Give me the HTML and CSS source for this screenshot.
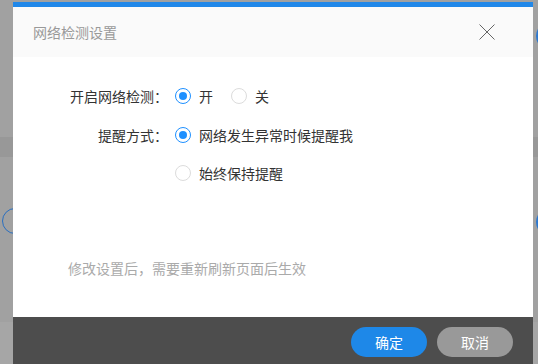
FILE: index.html
```html
<!DOCTYPE html>
<html lang="zh-CN">
  <head>
    <meta charset="UTF-8" />
    <meta name="viewport" content="width=device-width, initial-scale=1.0" />
    <title>网络检测设置</title>
    <link rel="stylesheet" href="styles.css">
  </head>
  <body>
    <!-- page behind the overlay -->
    <span class="bg-ring bg-ring-left"></span>
    <span class="bg-ring bg-ring-right-top"></span>
    <span class="bg-ring bg-ring-right-mid"></span>

    <div class="dialog">
      <div class="dialog-header">
        <span class="dialog-title">网络检测设置</span>
        <button class="close-btn" aria-label="关闭">
          <svg width="16" height="16" viewBox="0 0 16 16">
            <path d="M0.5 0.5 L15.5 15.5 M15.5 0.5 L0.5 15.5" stroke="#666" stroke-width="1" fill="none" />
          </svg>
        </button>
      </div>

      <div class="dialog-body">
        <div class="form-row">
          <span class="form-label">开启网络检测：</span>
          <div class="options">
            <label class="radio checked"><span class="dot"></span>开</label>
            <label class="radio"><span class="dot"></span>关</label>
          </div>
        </div>

        <div class="form-row">
          <span class="form-label">提醒方式：</span>
          <div class="options">
            <label class="radio checked"><span class="dot"></span>网络发生异常时候提醒我</label>
          </div>
        </div>

        <div class="form-row">
          <span class="form-label"></span>
          <div class="options">
            <label class="radio"><span class="dot"></span>始终保持提醒</label>
          </div>
        </div>

        <p class="note">修改设置后，需要重新刷新页面后生效</p>
      </div>

      <div class="dialog-footer">
        <button class="btn btn-primary">确定</button>
        <button class="btn btn-cancel">取消</button>
      </div>
    </div>
  </body>
</html>
```

FILE: styles.css
```css
body {
  font-family: 'Noto Sans CJK SC', 'Noto Sans', sans-serif;
  margin: 0;
  padding: 2px 0 0 13px;
  height: 364px;
  box-sizing: border-box;
  overflow: hidden;
  color: #333;
  background: linear-gradient(
    to bottom,
    #a1a1a1 0,
    #a1a1a1 137px,
    #989898 137px,
    #989898 157px,
    #a1a1a1 157px,
    #a1a1a1 322px,
    #a6a6a6 322px
  );
  position: relative;
}

.bg-ring {
  position: absolute;
  width: 24px;
  height: 24px;
  border: 1px solid #2a6fc0;
  border-radius: 50%;
}

.bg-ring-left {
  left: 2px;
  top: 208px;
}

.bg-ring-right-top {
  left: 536px;
  top: 22px;
  border-width: 2px;
  border-color: #2c78d0;
}

.bg-ring-right-mid {
  left: 536px;
  top: 208px;
  border-width: 2px;
  border-color: #2c78d0;
}

.dialog {
  position: relative;
  width: 520px;
  height: 370px;
  background: #fff;
  border-top: 5px solid #2188e9;
  display: flex;
  flex-direction: column;
}

.dialog-header {
  height: 50px;
  background: #fafafa;
  display: flex;
  align-items: center;
  justify-content: space-between;
  padding: 0 38px 0 20px;
}

.dialog-title {
  font-size: 14px;
  color: #999;
}

.close-btn {
  background: none;
  border: none;
  padding: 0;
  width: 16px;
  height: 16px;
  cursor: pointer;
  display: flex;
}

.dialog-body {
  height: 260px;
  box-sizing: border-box;
  padding-top: 29px;
  font-size: 14px;
}

.form-row {
  display: flex;
  align-items: center;
  height: 20px;
  margin-bottom: 18.5px;
}

.form-label {
  width: 155px;
  text-align: right;
  margin-right: 7px;
  line-height: 20px;
}

.options {
  display: flex;
  align-items: center;
  gap: 18px;
}

.radio {
  display: flex;
  align-items: center;
  gap: 8px;
  line-height: 20px;
  cursor: pointer;
}

.dot {
  width: 16px;
  height: 16px;
  box-sizing: border-box;
  border: 1px solid #dcdcdc;
  border-radius: 50%;
  display: flex;
  align-items: center;
  justify-content: center;
}

.radio.checked .dot {
  border-color: #1e90ff;
}

.radio.checked .dot::after {
  content: '';
  width: 8px;
  height: 8px;
  border-radius: 50%;
  background: #1e90ff;
}

.note {
  margin: 75px 0 0 55px;
  color: #aaa;
  font-size: 14px;
  line-height: 20px;
}

.dialog-footer {
  height: 53px;
  background: #4d4d4d;
  display: flex;
  justify-content: flex-end;
  align-items: flex-start;
  gap: 10px;
  padding: 10px 20px 0 0;
  box-sizing: border-box;
}

.btn {
  width: 76px;
  height: 30px;
  border: none;
  border-radius: 15px;
  color: #fff;
  font-family: inherit;
  font-size: 14px;
  cursor: pointer;
}

.btn-primary {
  background: #1e88e8;
}

.btn-cancel {
  background: #999;
}
```
